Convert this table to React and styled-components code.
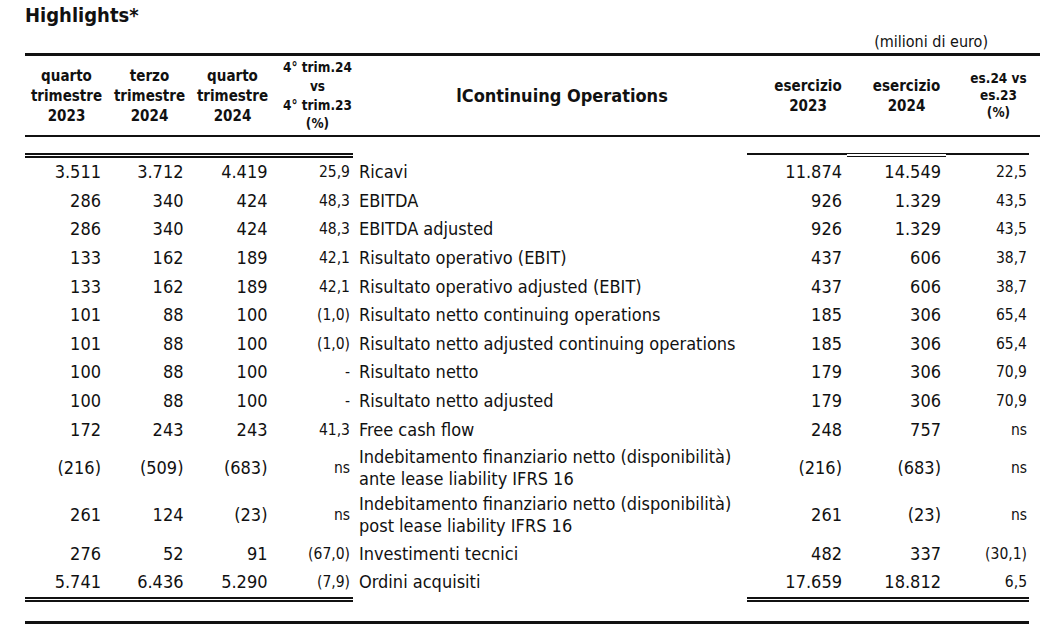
import React from "react";
import styled, { createGlobalStyle } from "styled-components";

const GlobalStyle = createGlobalStyle`
  html, body { margin: 0; padding: 0; background: #ffffff; }
  body {
    font-family: "DejaVu Sans Condensed", "DejaVu Sans", sans-serif;
    font-stretch: semi-condensed;
    color: #111111;
  }
`;

const COLS = "83px 83px 83px 79px 394px 100px 99px 83px 11px";

const Page = styled.div`
  width: 1046px;
  height: 631px;
  box-sizing: border-box;
  padding: 3px 6px 0 25px;
  overflow: hidden;
`;

const Title = styled.h1`
  margin: 0;
  font-size: 20px;
  line-height: 24px;
  font-weight: bold;
`;

const Unit = styled.div`
  margin-top: 5px;
  height: 21px;
  padding-right: 52px;
  text-align: right;
  font-size: 16px;
  line-height: 19px;
`;

const Header = styled.div`
  display: grid;
  grid-template-columns: ${COLS};
  height: 79px;
  border-top: 3px solid #111;
  border-bottom: 2px solid #111;
`;

const HeadCell = styled.div`
  display: flex;
  align-items: center;
  justify-content: center;
  text-align: center;
  padding-left: ${(p) => p.$shift || 0}px;
  font-weight: bold;
  font-size: ${(p) => p.$size || 15}px;
  line-height: ${(p) => p.$lh || 20}px;
`;

const Body = styled.div`
  margin-top: 16px;
`;

const RuleRow = styled.div`
  display: grid;
  grid-template-columns: ${COLS};
  height: 5px;
  align-items: start;
`;

const Segment = styled.div`
  grid-column: ${(p) => p.$col};
  box-sizing: border-box;
  border-top: ${(p) => (p.$kind === "double" ? p.$outer || 2 : 2)}px solid #111;
  border-bottom: ${(p) => (p.$kind === "double" ? `${p.$outer || 2}px solid #111` : "none")};
  height: ${(p) => (p.$kind === "double" ? (p.$outer || 2) * 2 + (p.$gap || 1) : 2)}px;
`;

const Row = styled.div`
  display: grid;
  grid-template-columns: ${COLS};
  height: ${(p) => (p.$tall ? 47.7 : 28.6)}px;
  align-items: center;
`;

const Num = styled.div`
  text-align: right;
  padding-right: ${(p) => p.$pad}px;
  font-size: 18px;
  line-height: 22px;
  white-space: nowrap;
`;

const Pct = styled.div`
  text-align: right;
  padding-right: ${(p) => p.$pad}px;
  font-size: 15.5px;
  line-height: 18px;
  white-space: nowrap;
`;

const Label = styled.div`
  padding-left: 6px;
  font-size: 18px;
  line-height: 22px;
  white-space: nowrap;
`;

const FootRule = styled.div`
  margin-top: 19px;
  width: 1004px;
  height: 3px;
  background: #111;
`;

const rows = [
  ["3.511", "3.712", "4.419", "25,9", ["Ricavi"], "11.874", "14.549", "22,5"],
  ["286", "340", "424", "48,3", ["EBITDA"], "926", "1.329", "43,5"],
  ["286", "340", "424", "48,3", ["EBITDA adjusted"], "926", "1.329", "43,5"],
  ["133", "162", "189", "42,1", ["Risultato operativo (EBIT)"], "437", "606", "38,7"],
  ["133", "162", "189", "42,1", ["Risultato operativo adjusted (EBIT)"], "437", "606", "38,7"],
  ["101", "88", "100", "(1,0)", ["Risultato netto continuing operations"], "185", "306", "65,4"],
  ["101", "88", "100", "(1,0)", ["Risultato netto adjusted continuing operations"], "185", "306", "65,4"],
  ["100", "88", "100", "-", ["Risultato netto"], "179", "306", "70,9"],
  ["100", "88", "100", "-", ["Risultato netto adjusted"], "179", "306", "70,9"],
  ["172", "243", "243", "41,3", ["Free cash flow"], "248", "757", "ns"],
  ["(216)", "(509)", "(683)", "ns", ["Indebitamento finanziario netto (disponibilità)", "ante lease liability IFRS 16"], "(216)", "(683)", "ns"],
  ["261", "124", "(23)", "ns", ["Indebitamento finanziario netto (disponibilità)", "post lease liability IFRS 16"], "261", "(23)", "ns"],
  ["276", "52", "91", "(67,0)", ["Investimenti tecnici"], "482", "337", "(30,1)"],
  ["5.741", "6.436", "5.290", "(7,9)", ["Ordini acquisiti"], "17.659", "18.812", "6,5"],
];

function Lines({ items }) {
  return items.map((t, i) => (
    <React.Fragment key={i}>
      {i > 0 && <br />}
      {t}
    </React.Fragment>
  ));
}

export default function App() {
  return (
    <>
      <GlobalStyle />
      <Page>
        <Title>Highlights*</Title>
        <Unit>(milioni di euro)</Unit>
        <Header>
          <HeadCell><Lines items={["quarto", "trimestre", "2023"]} /></HeadCell>
          <HeadCell><Lines items={["terzo", "trimestre", "2024"]} /></HeadCell>
          <HeadCell><Lines items={["quarto", "trimestre", "2024"]} /></HeadCell>
          <HeadCell $size={13.5} $lh={18.7} $shift={8}>
            <Lines items={["4° trim.24", "vs", "4° trim.23", "(%)"]} />
          </HeadCell>
          <HeadCell $size={18} $lh={22} $shift={24}>lContinuing Operations</HeadCell>
          <HeadCell $shift={22}><Lines items={["esercizio", "2023"]} /></HeadCell>
          <HeadCell $shift={20}><Lines items={["esercizio", "2024"]} /></HeadCell>
          <HeadCell $size={13.5} $lh={17} $shift={22}>
            <Lines items={["es.24 vs", "es.23", "(%)"]} />
          </HeadCell>
          <div />
        </Header>
        <Body>
          <RuleRow>
            <Segment $col="1 / 5" $kind="double" />
            <Segment $col="6 / 7" $kind="single" />
            <Segment $col="7 / 8" $kind="double" $outer={1.5} $gap={1} />
            <Segment $col="8 / 9" $kind="single" />
          </RuleRow>
          {rows.map((r, i) => (
            <Row key={i} $tall={r[4].length > 1}>
              <Num $pad={7}>{r[0]}</Num>
              <Num $pad={7.5}>{r[1]}</Num>
              <Num $pad={6.5}>{r[2]}</Num>
              <Pct $pad={3}>{r[3]}</Pct>
              <Label><Lines items={r[4]} /></Label>
              <Num $pad={5}>{r[5]}</Num>
              <Num $pad={5}>{r[6]}</Num>
              <Pct $pad={2}>{r[7]}</Pct>
              <div />
            </Row>
          ))}
          <RuleRow>
            <Segment $col="1 / 5" $kind="double" />
            <Segment $col="6 / 9" $kind="double" />
          </RuleRow>
        </Body>
        <FootRule />
      </Page>
    </>
  );
}
